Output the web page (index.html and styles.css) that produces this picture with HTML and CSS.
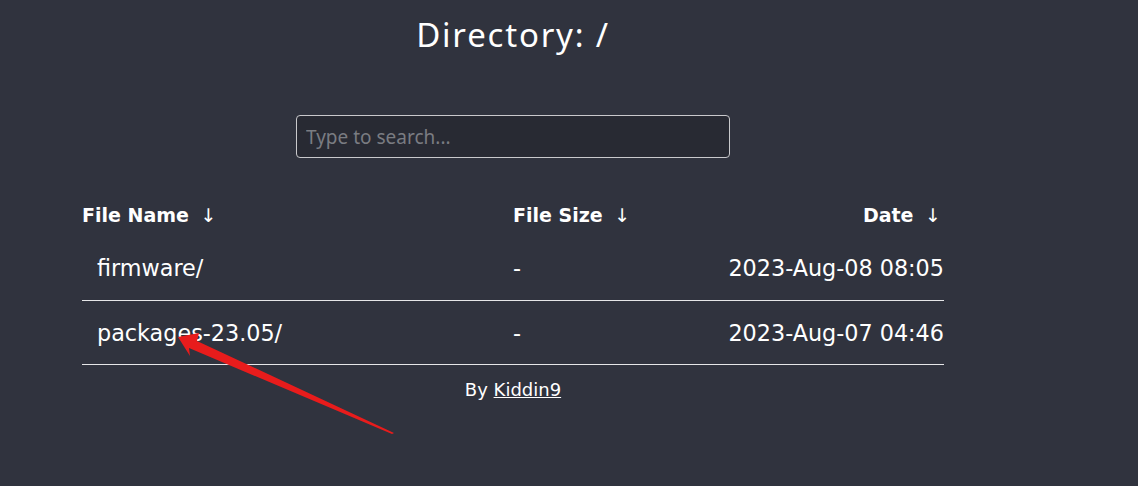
FILE: index.html
```html
<!DOCTYPE html>
<html lang="en">
<head>
    <meta charset="UTF-8">
    <meta name="viewport" content="width=device-width, initial-scale=1.0">
    <title>Directory: /</title>
    <link rel="stylesheet" href="styles.css">
</head>
<body>
    <div class="container">
        <h1>Directory: /</h1>
        <div class="search">
            <input type="text" id="search" placeholder="Type to search...">
        </div>
        <table class="listing">
            <thead>
                <tr>
                    <th class="col-name">File Name <span class="sort">↓</span></th>
                    <th class="col-size">File Size <span class="sort">↓</span></th>
                    <th class="col-date">Date <span class="sort">↓</span></th>
                </tr>
            </thead>
            <tbody>
                <tr>
                    <td class="col-name"><a href="firmware/">firmware/</a></td>
                    <td class="col-size">-</td>
                    <td class="col-date">2023-Aug-08 08:05</td>
                </tr>
                <tr>
                    <td class="col-name"><a href="packages-23.05/">packages-23.05/</a></td>
                    <td class="col-size">-</td>
                    <td class="col-date">2023-Aug-07 04:46</td>
                </tr>
            </tbody>
        </table>
        <p class="footer">By <a href="#">Kiddin9</a></p>
    </div>

    <svg class="annotation" width="1138" height="486" viewBox="0 0 1138 486">
        <polygon fill="#e81c1c" points="178,337 199,333 197,341 394,433 392,434 189,348 190,356" />
    </svg>
</body>
</html>
```

FILE: styles.css
```css
body, html {
    margin: 0;
    height: 100%;
}

body {
    background-color: #30333e;
    color: #ffffff;
    font-family: "DejaVu Sans", Verdana, sans-serif;
}

.container {
    width: 862px;
    margin-left: 82px;
}

h1 {
    margin: 0;
    padding-top: 13px;
    height: 50px;
    font-family: "Noto Sans", "Open Sans", sans-serif;
    font-size: 33px;
    font-weight: normal;
    letter-spacing: 1.8px;
    line-height: 44px;
    text-align: center;
}

.search {
    display: flex;
    justify-content: center;
    margin-top: 52px;
}

.search input {
    width: 434px;
    height: 43px;
    box-sizing: border-box;
    padding: 0 9px;
    background-color: #282a33;
    color: #ffffff;
    border: 1px solid #c9c9cc;
    border-radius: 4px;
    font-family: "Noto Sans", "Open Sans", sans-serif;
    font-size: 19px;
    outline: none;
}

.search input::placeholder {
    color: #7a7c82;
}

.listing {
    width: 100%;
    margin-top: 35px;
    border-collapse: collapse;
    table-layout: fixed;
}

.listing th {
    height: 43px;
    padding: 0;
    font-size: 19px;
    font-weight: bold;
    text-align: left;
}

.listing th .sort {
    font-weight: normal;
    margin-left: 5px;
}

.listing td {
    height: 63px;
    padding: 0;
    font-size: 22.3px;
    border-bottom: 1px solid #e6e6e8;
}

.listing tbody tr:first-child td {
    height: 64px;
}

.listing td.col-name {
    padding-left: 15px;
}

.col-name {
    width: 431px;
}

.col-size {
    width: 150px;
}

.listing th.col-date,
.listing td.col-date {
    text-align: right;
}

.listing th.col-date {
    padding-right: 3px;
}

.listing a {
    color: #ffffff;
    text-decoration: none;
}

.footer {
    margin: 14px 0 0 0;
    font-size: 18px;
    text-align: center;
}

.footer a {
    color: #ffffff;
    text-decoration: underline;
}

.annotation {
    position: absolute;
    top: 0;
    left: 0;
    pointer-events: none;
}
```
